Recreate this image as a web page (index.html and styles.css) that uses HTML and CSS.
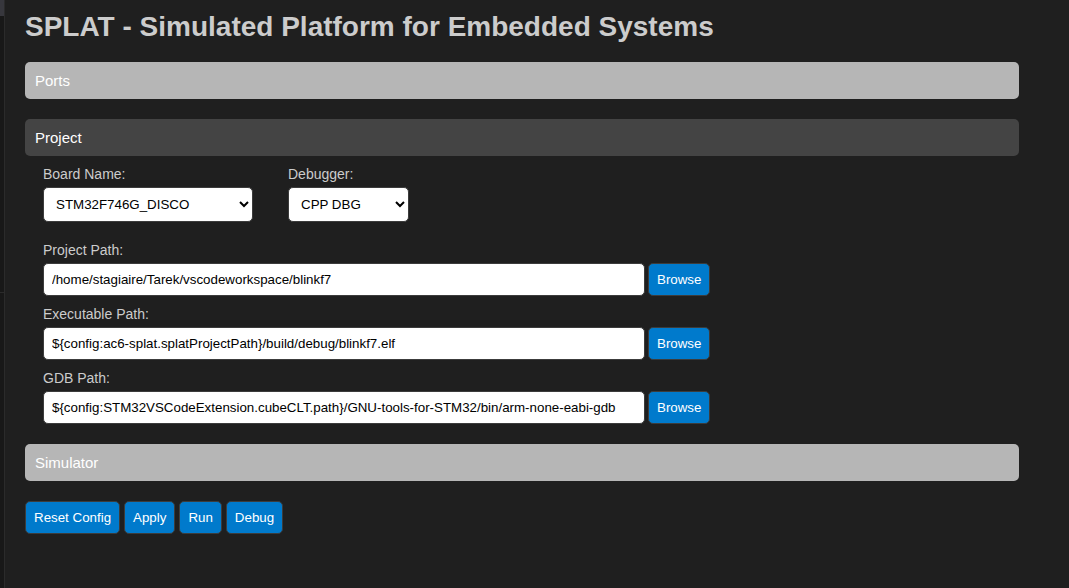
FILE: index.html
```html
<!DOCTYPE html>
<html lang="en">
<head>
<meta charset="utf-8">
<title>SPLAT</title>
<link rel="stylesheet" href="styles.css">
</head>
<body>
<div class="window">
  <aside class="sidebar">
    <div class="sidebar-selection"></div>
    <div class="sidebar-upper"></div>
    <div class="sidebar-lower"></div>
  </aside>
  <main class="editor">
    <h1 class="title">SPLAT - Simulated Platform for Embedded Systems</h1>
    <button class="section" type="button">Ports</button>
    <button class="section section-open" type="button" aria-expanded="true">Project</button>
    <div class="panel">
      <div class="choices">
        <div class="field">
          <label for="board">Board Name:</label>
          <select class="control board" id="board"><option>STM32F746G_DISCO</option></select>
        </div>
        <div class="field">
          <label for="debugger">Debugger:</label>
          <select class="control debugger" id="debugger"><option>CPP DBG</option></select>
        </div>
      </div>
      <div class="paths">
        <div class="field">
          <label for="project">Project Path:</label>
          <div class="path-row">
            <input class="control path" id="project" type="text" value="/home/stagiaire/Tarek/vscodeworkspace/blinkf7">
            <button class="btn" type="button">Browse</button>
          </div>
        </div>
        <div class="field">
          <label for="executable">Executable Path:</label>
          <div class="path-row">
            <input class="control path" id="executable" type="text" value="${config:ac6-splat.splatProjectPath}/build/debug/blinkf7.elf">
            <button class="btn" type="button">Browse</button>
          </div>
        </div>
        <div class="field">
          <label for="gdb">GDB Path:</label>
          <div class="path-row">
            <input class="control path" id="gdb" type="text" value="${config:STM32VSCodeExtension.cubeCLT.path}/GNU-tools-for-STM32/bin/arm-none-eabi-gdb">
            <button class="btn" type="button">Browse</button>
          </div>
        </div>
      </div>
    </div>
    <button class="section" type="button">Simulator</button>
    <div class="actions">
      <button class="btn" type="button">Reset Config</button>
      <button class="btn" type="button">Apply</button>
      <button class="btn" type="button">Run</button>
      <button class="btn" type="button">Debug</button>
    </div>
  </main>
</div>
</body>
</html>
```
FILE: styles.css
```css
* {
  box-sizing: border-box;
}

body {
  margin: 0;
  background: #1f1f1f;
  color: #cccccc;
  font: 14px/16px "Liberation Sans", Arial, sans-serif;
}

.window {
  display: flex;
  min-height: 100vh;
}

.sidebar {
  display: flex;
  flex-direction: column;
  flex: none;
  width: 5px;
  background: #181818;
  border-right: 1px solid #2b2b2b;
}

.sidebar-selection {
  height: 16px;
  background: #37373d;
}

.sidebar-upper {
  height: 276px;
}

.sidebar-lower {
  flex: 1;
  border-top: 1px solid #2b2b2b;
}

.editor {
  flex: 1;
  min-width: 0;
  padding: 10px 50px 20px 20px;
}

.title {
  margin: 0 0 18px;
  font-size: 28px;
  line-height: 34px;
}

.section {
  display: block;
  width: 100%;
  margin-bottom: 20px;
  padding: 10px;
  border: 0;
  border-radius: 5px;
  background: #b6b6b6;
  color: #ffffff;
  font: 15px/17px "Liberation Sans", Arial, sans-serif;
  text-align: left;
}

.section-open {
  margin-bottom: 10px;
  background: #444444;
}

.panel {
  display: flex;
  flex-direction: column;
  gap: 20px;
  padding: 0 18px 20px;
}

.choices {
  display: flex;
  gap: 35px;
}

.paths {
  display: flex;
  flex-direction: column;
  gap: 10px;
}

.field {
  display: flex;
  flex-direction: column;
  gap: 5px;
}

.path-row {
  display: flex;
  gap: 3px;
}

.actions {
  display: flex;
  flex-wrap: wrap;
  gap: 4px;
}

.control,
.btn {
  padding: 8px;
  border: 1px solid #3c3c3c;
  border-radius: 5px;
  font-family: "Liberation Sans", Arial, sans-serif;
  line-height: 15px;
}

.control {
  background: #ffffff;
  color: #000000;
}

.board {
  width: 210px;
  height: 35px;
}

.debugger {
  width: 121px;
  height: 35px;
}

.path {
  flex: 0 1 602px;
  min-width: 0;
  height: 33px;
}

.btn {
  flex: none;
  background: #007acc;
  color: #ffffff;
}
```
